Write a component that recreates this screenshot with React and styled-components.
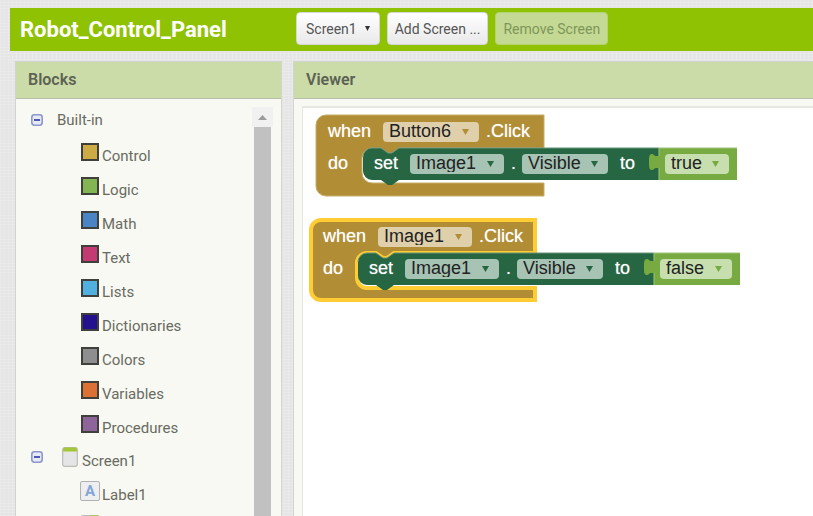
import React from "react";
import styled, { createGlobalStyle } from "styled-components";

const GlobalStyle = createGlobalStyle`
  *, *::before, *::after { box-sizing: border-box; }
  body {
    margin: 0;
    font-family: Roboto, "Liberation Sans", sans-serif;
    color: #686b62;
    background-color: #e5e5e5;
    background-image:
      repeating-linear-gradient(0deg, rgba(255, 255, 255, 0.14) 0 1px, transparent 1px 3px),
      repeating-linear-gradient(90deg, rgba(255, 255, 255, 0.14) 0 1px, transparent 1px 4px);
  }
`;

const Page = styled.div`
  display: flex;
  flex-direction: column;
  gap: 10px;
  height: 100vh;
  padding: 8px 0 0 10px;
  overflow: hidden;
`;

const Toolbar = styled.header`
  display: flex;
  align-items: center;
  flex: none;
  height: 43px;
  padding: 0 0 2px 10px;
  background: #8fc202;
`;

const ProjectTitle = styled.h1`
  flex: none;
  width: 276px;
  margin: 0;
  padding-top: 3px;
  font-size: 22px;
  line-height: 28px;
  font-weight: 700;
  color: #fff;
`;

const ButtonGroup = styled.div`
  display: flex;
  gap: 7px;
`;

const ToolButton = styled.button`
  display: flex;
  align-items: center;
  gap: 8px;
  height: 33px;
  padding: 0 ${(p) => (p.$menu ? "9px" : "7px")};
  border: 1px solid #d6d6d6;
  border-radius: 4px;
  background: linear-gradient(#ffffff, #e9e9e9);
  color: #555;
  font: 400 14px/20px Roboto, sans-serif;
  white-space: nowrap;

  &:disabled {
    border-color: #b5d36c;
    background: #c4d993;
    color: #7e965a;
  }
`;

const Workspace = styled.main`
  display: grid;
  grid-template-columns: 267px minmax(0, 1fr);
  gap: 11px;
  flex: 1;
  min-height: 0;
  padding-left: 5px;
`;

const Panel = styled.section`
  display: flex;
  flex-direction: column;
  min-height: 0;
  border: 1px solid #d2d4cf;
  border-bottom: 0;
  border-right-width: ${(p) => (p.$bleed ? 0 : "1px")};
  background: #f8f9f2;
`;

const PanelTitle = styled.h2`
  flex: none;
  height: 37px;
  margin: 0;
  padding-left: 12px;
  border-bottom: 1px solid #b9c0aa;
  background: #ccdca9;
  color: #5c6354;
  font-size: 16px;
  line-height: 36px;
  font-weight: 600;
`;

const BlocksBody = styled.div`
  display: flex;
  flex: 1;
  min-height: 0;
  padding: 8px 8px 0 0;
`;

const Tree = styled.ul`
  flex: 1;
  margin: 0;
  padding: 0 0 0 15px;
  overflow: hidden;
  list-style: none;
`;

const Branch = styled.ul`
  margin: 0;
  padding: 0 0 0 ${(p) => p.$indent}px;
  list-style: none;
`;

const TreeRow = styled.div`
  display: flex;
  align-items: flex-start;
  height: 34px;
  padding-top: ${(p) => p.$top || 0}px;
`;

const Toggle = styled.button`
  display: flex;
  flex: none;
  width: 12px;
  height: 12px;
  margin: 4px ${(p) => p.$gap}px 0 0;
  padding: 0;
  border: 0;
  background: none;
`;

const TreeLabel = styled.span`
  padding-top: ${(p) => p.$drop || 0}px;
  font-size: 15px;
  line-height: 20px;
`;

const Swatch = styled.span`
  flex: none;
  width: 18px;
  height: 18px;
  margin-right: 3px;
  border: 2px solid #3f403c;
  background: ${(p) => p.$color};
`;

const IconSlot = styled.span`
  display: flex;
  flex: none;
  margin-right: ${(p) => p.$gap}px;
`;

const ScrollRail = styled.div`
  display: flex;
  flex-direction: column;
  align-items: center;
  flex: none;
  width: 21px;
`;

const ScrollUp = styled.button`
  display: flex;
  align-items: center;
  justify-content: center;
  flex: none;
  width: 21px;
  height: 20px;
  padding: 0;
  border: 0;
  background: #f1f1f1;
`;

const ScrollThumb = styled.div`
  flex: 1;
  width: 17px;
  background: #c1c1c1;
`;

const ViewerBody = styled.div`
  display: flex;
  flex: 1;
  min-height: 0;
  padding: 7px 0 0 8px;
`;

const Canvas = styled.div`
  position: relative;
  flex: 1;
  overflow: hidden;
  border: 2px solid #e6e7e1;
  border-width: 2px 0 0 1px;
  background: #fff;
`;

/* Blocks sit at free positions on the canvas. */
const BlockNode = styled.div`
  position: absolute;
  left: ${(p) => p.$x}px;
  top: ${(p) => p.$y}px;
  display: grid;
`;

const BlockShape = styled.svg`
  grid-area: 1 / 1;
  overflow: visible;
`;

const BlockRows = styled.div`
  grid-area: 1 / 1;
  z-index: 1;
  display: flex;
  flex-direction: column;
  gap: 12px;
  padding: 7px 0 0 12px;
  color: #fff;
  font: 400 18px/18px "Liberation Sans", Arial, sans-serif;
`;

const BlockRow = styled.div`
  display: flex;
  align-items: flex-start;
  height: 20px;
`;

const Word = styled.span`
  flex: none;
  width: ${(p) => p.$w}px;
  text-shadow: 0 0 1px rgba(255, 255, 255, 0.6);
`;

const FieldBox = styled.span`
  display: grid;
  flex: none;
  align-items: center;
  width: ${(p) => p.$w}px;
  margin-right: ${(p) => p.$gap || 0}px;
  color: ${(p) => p.$arrow};
`;

const FieldSelect = styled.select`
  grid-area: 1 / 1;
  width: 100%;
  height: 20px;
  padding: 0 0 2px 6px;
  border: 0;
  border-radius: 4px;
  appearance: none;
  background: ${(p) => p.$fill};
  color: #222;
  font: 400 18px/18px "Liberation Sans", Arial, sans-serif;
`;

const FieldArrow = styled.svg`
  grid-area: 1 / 1;
  justify-self: end;
  margin-right: 10px;
  pointer-events: none;
`;

const tones = {
  event: { fill: "#dfcfaa", arrow: "#b18e35" },
  setter: { fill: "#a6c3b3", arrow: "#266643" },
  logic: { fill: "#c7dfaf", arrow: "#77ab41" },
};

function Field({ value, label, tone, width, gap }) {
  const t = tones[tone];
  return (
    <FieldBox $w={width} $gap={gap} $arrow={t.arrow}>
      <FieldSelect aria-label={label} defaultValue={value} $fill={t.fill}>
        <option>{value}</option>
      </FieldSelect>
      <FieldArrow width="7" height="6" viewBox="0 0 7 6" aria-hidden="true">
        <path d="M0 0H7L3.5 6Z" fill="currentColor" />
      </FieldArrow>
    </FieldBox>
  );
}

const eventPath = (w, h) =>
  `M10 0H${w}V33H83l-7 5h-4l-7-5H56a10 10 0 0 0-10 10V58a10 10 0 0 0 10 10H${w}V${h}H10A10 10 0 0 1 0 ${h - 10}V10A10 10 0 0 1 10 0Z`;
const setterPath =
  "M56 33H65l7 5h4l7-5H343V65H83l-7 5h-4l-7-5H56a9 9 0 0 1-9-9V42a9 9 0 0 1 9-9Z";

function EventBlock({ x, y, component, componentWidth, value, valueWidth, selected }) {
  const end = 349 + valueWidth + 8;
  return (
    <BlockNode $x={x} $y={y}>
      <BlockShape width={end} height="81" viewBox={`0 0 ${end} 81`} aria-hidden="true">
        <path
          d={selected ? eventPath(224, 80) : eventPath(228, 81)}
          fill="#b18e35"
          stroke={selected ? "#fc3" : "#c8ad6b"}
          strokeWidth={selected ? 4 : 1}
        />
        <path d={setterPath} fill="#266643" />
        <path d="M47 42a9 9 0 0 1 9-9H65l7 5h4l7-5H343" fill="none" stroke="#67947b" />
        <path
          d={`M343 33V41h-3c-2 0-2-2-4-2c-3 0-3 3-3 8s0 8 3 8c2 0 2-2 4-2h3V65H${end}V33Z`}
          fill="#77ab41"
        />
        <path d={`M343 65V53M343 41V33H${end}`} fill="none" stroke="#a0c47a" />
      </BlockShape>
      <BlockRows>
        <BlockRow>
          <Word $w={55}>when</Word>
          <Field value={component} label="Component" tone="event" width={componentWidth} gap={7} />
          <Word $w={50}>.Click</Word>
        </BlockRow>
        <BlockRow>
          <Word $w={46}>do</Word>
          <Word $w={36}>set</Word>
          <Field value="Image1" label="Target component" tone="setter" width={94} gap={7} />
          <Word $w={11}>.</Word>
          <Field value="Visible" label="Property" tone="setter" width={86} gap={12} />
          <Word $w={45}>to</Word>
          <Field value={value} label="Value" tone="logic" width={valueWidth} />
        </BlockRow>
      </BlockRows>
    </BlockNode>
  );
}

function CollapseToggle({ label, gap }) {
  return (
    <Toggle type="button" aria-label={label} $gap={gap}>
      <svg width="12" height="12" viewBox="0 0 12 12" aria-hidden="true">
        <rect x="0.8" y="0.8" width="10.4" height="10.4" rx="2.6" fill="#e6e9f6" stroke="#8e97cb" strokeWidth="1.6" />
        <path d="M3 6H9" stroke="#4047b0" strokeWidth="1.8" />
      </svg>
    </Toggle>
  );
}

function ScreenIcon() {
  return (
    <svg width="16" height="20" viewBox="0 0 16 20" aria-hidden="true">
      <rect x="0.7" y="0.7" width="14.6" height="18.6" rx="2" fill="#e5e5e5" stroke="#bbbcb8" strokeWidth="1.2" />
      <path d="M1 4.5V2.5Q1 0.5 3 0.5H13Q15 0.5 15 2.5V4.5Z" fill="#a4c639" />
    </svg>
  );
}

const LabelIcon = styled.span`
  display: flex;
  align-items: center;
  justify-content: center;
  width: 20px;
  height: 20px;
  border: 1px solid #b0b1b0;
  border-radius: 2px;
  background: #eceeef;
  color: #84a5da;
  font: 700 15px/18px Roboto, sans-serif;
`;

function ArrangementIcon() {
  return (
    <svg width="20" height="20" viewBox="0 0 20 20" aria-hidden="true">
      <rect x="0.5" y="0.5" width="19" height="19" rx="2" fill="#e5e8dc" stroke="#b9bab9" />
      <path d="M10 0H18V8H10Z" fill="#a9c65b" />
    </svg>
  );
}

const drawers = [
  ["Control", "#cdab45"],
  ["Logic", "#83b553"],
  ["Math", "#4a84c4"],
  ["Text", "#c33b72"],
  ["Lists", "#51b0df"],
  ["Dictionaries", "#22108f"],
  ["Colors", "#8e8e8e"],
  ["Variables", "#dc7136"],
  ["Procedures", "#8e659b"],
];

export default function App() {
  return (
    <>
      <GlobalStyle />
      <Page>
        <Toolbar>
          <ProjectTitle>Robot_Control_Panel</ProjectTitle>
          <ButtonGroup>
            <ToolButton type="button" aria-haspopup="menu" $menu>
              Screen1
              <svg width="5" height="5" viewBox="0 0 5 5" aria-hidden="true">
                <path d="M0 0H5L2.5 5Z" fill="#333" />
              </svg>
            </ToolButton>
            <ToolButton type="button">Add Screen ...</ToolButton>
            <ToolButton type="button" disabled>Remove Screen</ToolButton>
          </ButtonGroup>
        </Toolbar>

        <Workspace>
          <Panel>
            <PanelTitle>Blocks</PanelTitle>
            <BlocksBody>
              <Tree>
                <li>
                  <TreeRow $top={3}>
                    <CollapseToggle label="Collapse Built-in" gap={14} />
                    <TreeLabel>Built-in</TreeLabel>
                  </TreeRow>
                  <Branch $indent={50}>
                    {drawers.map(([name, color]) => (
                      <TreeRow as="li" key={name} $top={2}>
                        <Swatch $color={color} />
                        <TreeLabel $drop={3}>{name}</TreeLabel>
                      </TreeRow>
                    ))}
                  </Branch>
                </li>
                <li>
                  <TreeRow>
                    <CollapseToggle label="Collapse Screen1" gap={19} />
                    <IconSlot $gap={4}><ScreenIcon /></IconSlot>
                    <TreeLabel $drop={4}>Screen1</TreeLabel>
                  </TreeRow>
                  <Branch $indent={49}>
                    <TreeRow as="li">
                      <IconSlot $gap={2}><LabelIcon aria-hidden="true">A</LabelIcon></IconSlot>
                      <TreeLabel $drop={4}>Label1</TreeLabel>
                    </TreeRow>
                    <TreeRow as="li">
                      <IconSlot $gap={2}><ArrangementIcon /></IconSlot>
                    </TreeRow>
                  </Branch>
                </li>
              </Tree>
              <ScrollRail>
                <ScrollUp type="button" aria-label="Scroll up">
                  <svg width="9" height="5" viewBox="0 0 9 5" aria-hidden="true">
                    <path d="M4.5 0L9 5H0Z" fill="#9c9c9c" />
                  </svg>
                </ScrollUp>
                <ScrollThumb />
              </ScrollRail>
            </BlocksBody>
          </Panel>

          <Panel $bleed>
            <PanelTitle>Viewer</PanelTitle>
            <ViewerBody>
              <Canvas>
                <EventBlock x={13} y={7} component="Button6" componentWidth={96} value="true" valueWidth={64} />
                <EventBlock x={8} y={112} component="Image1" componentWidth={94} value="false" valueWidth={72} selected />
              </Canvas>
            </ViewerBody>
          </Panel>
        </Workspace>
      </Page>
    </>
  );
}
